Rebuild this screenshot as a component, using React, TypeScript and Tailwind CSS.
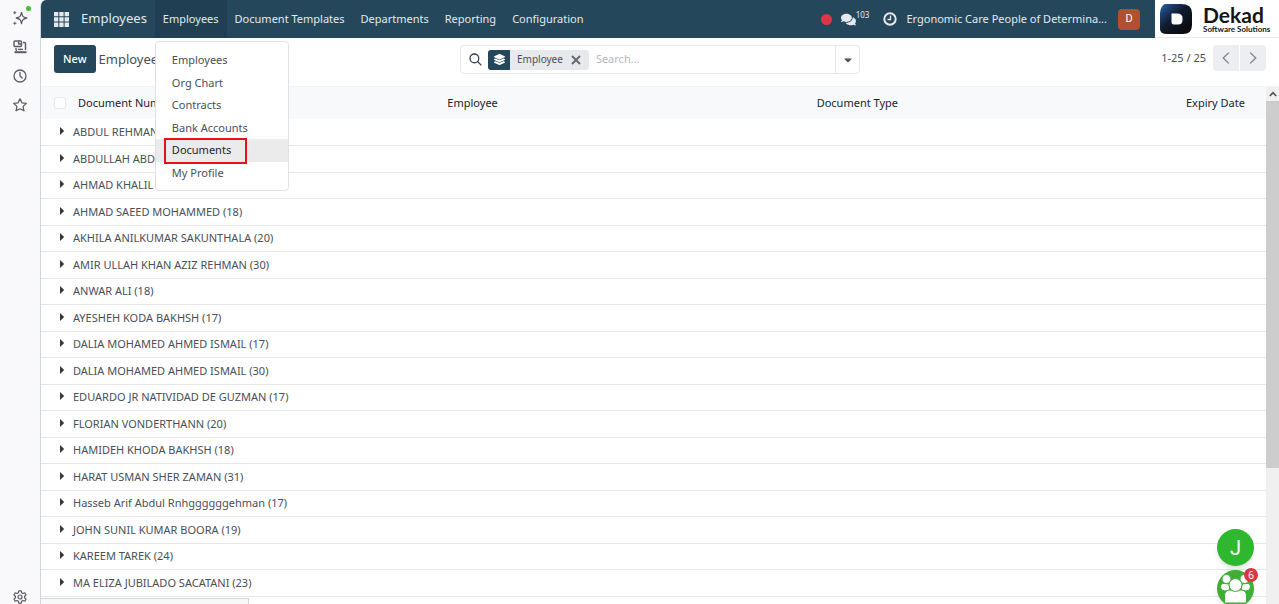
import { useState } from 'react';
import { FaCaretDown, FaComments, FaLayerGroup } from 'react-icons/fa';

const menuItems = ['Document Templates', 'Departments', 'Reporting', 'Configuration'];

const employeeLinks = ['Employees', 'Org Chart', 'Contracts', 'Bank Accounts', 'Documents', 'My Profile'];

const groups = [
  { name: 'ABDUL REHMAN', count: 17 },
  { name: 'ABDULLAH ABDUL', count: 18 },
  { name: 'AHMAD KHALIL IBRAHIM', count: 19 },
  { name: 'AHMAD SAEED MOHAMMED', count: 18 },
  { name: 'AKHILA ANILKUMAR SAKUNTHALA', count: 20 },
  { name: 'AMIR ULLAH KHAN AZIZ REHMAN', count: 30 },
  { name: 'ANWAR ALI', count: 18 },
  { name: 'AYESHEH KODA BAKHSH', count: 17 },
  { name: 'DALIA MOHAMED AHMED ISMAIL', count: 17 },
  { name: 'DALIA MOHAMED AHMED ISMAIL', count: 30 },
  { name: 'EDUARDO JR NATIVIDAD DE GUZMAN', count: 17 },
  { name: 'FLORIAN VONDERTHANN', count: 20 },
  { name: 'HAMIDEH KHODA BAKHSH', count: 18 },
  { name: 'HARAT USMAN SHER ZAMAN', count: 31 },
  { name: 'Hasseb Arif Abdul Rnhggggggehman', count: 17 },
  { name: 'JOHN SUNIL KUMAR BOORA', count: 19 },
  { name: 'KAREEM TAREK', count: 24 },
  { name: 'MA ELIZA JUBILADO SACATANI', count: 23 },
];

function Sidebar() {
  return (
    <aside className="flex w-10 shrink-0 flex-col items-center bg-[#f9f9fb] pt-[9px] text-[#5b5b66]">
      <div className="flex flex-1 flex-col items-center gap-[11px]">
        <button aria-label="Assistant" className="relative flex h-[18px] w-4 items-center justify-center">
          <svg viewBox="0 0 16 16" className="h-4 w-4 shrink-0" fill="none" stroke="currentColor" strokeWidth="1.3" strokeLinejoin="round">
            <path d="M9.500 2.400 C10.200 6.300 11 7.300 14.800 8 C11 8.800 10.200 9.700 9.500 13.600 C8.800 9.700 8 8.800 4.200 8 C8 7.300 8.800 6.300 9.500 2.400Z" />
            <path d="M2.800 1.200v3M1.300 2.700h3M2.800 11.800v3M1.300 13.300h3" strokeWidth="1" />
          </svg>
          <span className="absolute -right-[3px] -top-[3px] h-[5px] w-[5px] rounded-full bg-[#3fbf2f]" />
        </button>
        <button aria-label="Synced tabs" className="flex h-[18px] items-center">
          <svg viewBox="0 0 16 16" className="h-4 w-4" fill="none" stroke="currentColor" strokeWidth="1.4">
            <rect x="2" y="2" width="7.5" height="5.5" rx="1" />
            <path d="M6.600 2v3h2.900" />
            <path d="M11 3.500h1.500a1 1 0 0 1 1 1V11M4 9V10.500a1 1 0 0 0 1 1" />
            <path d="M2.500 13.200h12" strokeWidth="2" />
            <path d="M6 10.400h5" />
          </svg>
        </button>
        <button aria-label="History" className="flex h-[18px] items-center">
          <svg viewBox="0 0 16 16" className="h-4 w-4" fill="none" stroke="currentColor" strokeWidth="1.3" strokeLinecap="round">
            <circle cx="8" cy="8" r="6" />
            <path d="M8 4.500V8l2.200 2" />
          </svg>
        </button>
        <button aria-label="Bookmarks" className="flex h-[18px] items-center">
          <svg viewBox="0 0 16 16" className="h-4 w-4" fill="none" stroke="currentColor" strokeWidth="1.3" strokeLinejoin="round">
            <path d="M8 1.800l1.900 4 4.400.6-3.200 3 .8 4.400L8 11.700l-3.900 2.100.8-4.400-3.200-3 4.400-.6z" />
          </svg>
        </button>
      </div>
      <button aria-label="Settings" className="flex h-[14px] items-center">
        <svg viewBox="0 0 16 16" className="h-4 w-4" fill="none" stroke="currentColor" strokeWidth="1.200" strokeLinejoin="round">
          <path d="M6.800 1.800h2.400l.4 1.900 1.300.8 1.900-.7L14 5.900 12.600 7.200v1.600L14 10.100l-1.200 2.100-1.900-.7-1.300.8-.4 1.900H6.800l-.4-1.900-1.300-.8-1.900.7L2 10.100l1.400-1.300V7.200L2 5.900l1.200-2.100 1.900.7 1.300-.8z" />
          <circle cx="8" cy="8" r="2" />
        </svg>
      </button>
    </aside>
  );
}

function DekadLogo() {
  return (
    <a href="#" className="flex w-[124px] shrink-0 items-center gap-[11px] border-b border-gray-200 bg-white pl-[5px] text-[#151515]">
      <svg viewBox="0 0 32 30" className="h-[30px] w-8 shrink-0">
        <defs>
          <linearGradient id="dekad" x1="0" y1="0" x2="0.8" y2="0.8">
            <stop offset="0" stopColor="#2f63a8" />
            <stop offset="0.25" stopColor="#1d3f70" />
            <stop offset="0.55" stopColor="#101c2e" />
            <stop offset="1" stopColor="#0b0d12" />
          </linearGradient>
        </defs>
        <path d="M5 0H21Q32 0 32 9V21Q32 30 23 30H7Q0 30 0 25V9Q0 5 2 2.500Q3.500 0 5 0Z" fill="url(#dekad)" />
        <path d="M11.500 9.500H17Q22.500 9.500 22.500 14V16Q22.500 20.500 18 20.500H14Q11.500 20.500 11.500 18Z" fill="#fff" />
      </svg>
      <span className="flex flex-col whitespace-nowrap font-[Lato,sans-serif] font-bold">
        <span className="text-[21px] leading-5">Dekad</span>
        <span className="text-[8px] leading-2">Software Solutions</span>
      </span>
    </a>
  );
}

function EmployeesMenu() {
  const [open, setOpen] = useState(true);

  return (
    <div className="relative flex">
      <button onClick={() => setOpen(!open)} className="bg-[#213f52] px-2">
        Employees
      </button>
      {open && (
        <div className="absolute left-0 top-full z-20 mt-[3px] flex w-[134px] flex-col rounded border border-[#dee2e6] bg-white pb-[6px] pt-[7px] text-[#495057]">
          {employeeLinks.map((link) => (
            <a
              key={link}
              href="#"
              className={
                link === 'Documents'
                  ? 'relative flex h-[23px] items-center bg-[#ebebeb] pl-4 text-[#212529]'
                  : 'flex items-center pl-4 odd:h-[23px] even:h-[22px]'
              }
            >
              {link}
              {link === 'Documents' && (
                <span className="absolute left-2 h-[26px] w-[83px] border-2 border-[#e3131b]" />
              )}
            </a>
          ))}
        </div>
      )}
    </div>
  );
}

function Navbar() {
  return (
    <header className="flex h-[38px] shrink-0 bg-[#25475b] text-[#e4e9ed]">
      <nav className="flex items-stretch whitespace-nowrap">
        <button aria-label="Home menu" className="pl-[13px] pr-3">
          <svg viewBox="0 0 15 15" className="h-[15px] w-[15px]" fill="currentColor">
            <path d="M0 0h4.300v4.300H0zM5.300 0h4.300v4.300H5.300zM10.600 0H15v4.300h-4.400zM0 5.300h4.300v4.300H0zM5.300 5.300h4.300v4.300H5.300zM10.600 5.300H15v4.300h-4.400zM0 10.600h4.300V15H0zM5.300 10.600h4.300V15H5.300zM10.600 10.600H15V15h-4.400z" />
          </svg>
        </button>
        <a href="#" className="flex items-center pr-2 text-[13px]">
          Employees
        </a>
        <EmployeesMenu />
        {menuItems.map((item) => (
          <button key={item} className="px-2">
            {item}
          </button>
        ))}
      </nav>
      <div className="ml-auto flex items-center whitespace-nowrap">
        <span className="mr-[9px] h-[11px] w-[11px] rounded-full bg-[#dc3545]" />
        <button aria-label="Messages" className="mr-[14px] flex items-center">
          <FaComments className="h-[15px] w-[15px]" />
          <sup className="top-0 mb-2 text-[8px] leading-none">103</sup>
        </button>
        <button aria-label="Activities" className="mr-[9px]">
          <svg viewBox="0 0 14 14" className="h-[14px] w-[14px]" fill="none" stroke="currentColor" strokeWidth="2">
            <circle cx="7" cy="7" r="5.700" />
            <path d="M7.500 3.500V7.500H4.500" strokeWidth="1.300" />
          </svg>
        </button>
        <button className="mr-[11px]">Ergonomic Care People of Determina...</button>
        <button className="mr-[15px] flex h-[21px] w-[22px] items-center justify-center rounded-sm bg-[#b54d31] font-[Roboto,sans-serif] text-white">
          D
        </button>
      </div>
      <DekadLogo />
    </header>
  );
}

function ControlPanel() {
  return (
    <div className="flex h-[49px] shrink-0 border-b border-gray-100 px-[13px] pt-[7px] text-[#495057]">
      <div className="flex flex-1 items-start gap-[3px]">
        <button className="h-[28px] rounded-[3px] bg-[#25475b] px-[9px] font-medium text-white">New</button>
        <h1 className="text-[13px] leading-[28px]">Employee Documents</h1>
      </div>
      <div className="flex h-[29px] w-[400px] items-stretch rounded border border-gray-200">
        <div className="flex flex-1 items-center">
          <svg viewBox="0 0 14 14" className="ml-2 mr-[6px] h-[13px] w-[13px]" fill="none" stroke="#374151" strokeWidth="1.4">
            <circle cx="5.800" cy="5.800" r="4.700" />
            <path d="M9.200 9.200L13.300 13.300" />
          </svg>
          <div className="flex h-5 items-center overflow-hidden rounded-[3px] bg-[#e7e9ed] text-[10px]">
            <span className="flex h-5 w-[22px] items-center justify-center bg-[#25475b] text-white">
              <FaLayerGroup className="h-[11px] w-[11px]" />
            </span>
            <span className="pl-[7px]">Employee</span>
            <button aria-label="Remove" className="px-2">
              <svg viewBox="0 0 10 10" className="h-[10px] w-[10px]" fill="none" stroke="#5f666d" strokeWidth="1.8">
                <path d="M1 1l8 8M9 1L1 9" />
              </svg>
            </button>
          </div>
          <input
            type="text"
            aria-label="Search"
            placeholder="Search..."
            className="min-w-0 flex-1 px-[7px] outline-none placeholder:text-[#b4b9be]"
          />
        </div>
        <button aria-label="Toggle search panel" className="flex w-6 items-center justify-center border-l border-gray-200">
          <FaCaretDown className="h-3 w-3" />
        </button>
      </div>
      <div className="flex flex-1 items-start justify-end leading-[26px]">
        <span className="mr-[7px]">1-25 / 25</span>
        <button aria-label="Previous" className="mr-px flex h-[26px] w-[26px] items-center justify-center rounded-l-sm bg-[#eceef1]">
          <svg viewBox="0 0 8 12" className="h-3 w-2" fill="none" stroke="#777d84" strokeWidth="1.200">
            <path d="M6.800 .6L1.200 6l5.600 5.400" />
          </svg>
        </button>
        <button aria-label="Next" className="flex h-[26px] w-[26px] items-center justify-center rounded-r-sm bg-[#eceef1]">
          <svg viewBox="0 0 8 12" className="h-3 w-2" fill="none" stroke="#777d84" strokeWidth="1.200">
            <path d="M1.200 .6L6.800 6l-5.600 5.400" />
          </svg>
        </button>
      </div>
    </div>
  );
}

function DocumentTable() {
  return (
    <table className="w-full table-fixed border-collapse whitespace-nowrap text-left">
      <colgroup>
        <col className="w-[31px]" />
        <col />
        <col />
        <col />
        <col className="w-[86px]" />
      </colgroup>
      <thead>
        <tr className="h-8 bg-[#f8f9fb] text-[#212529]">
          <th className="pl-[13px]">
            <input
              type="checkbox"
              aria-label="Select all"
              className="block h-3 w-3 appearance-none rounded-[3px] border border-gray-200 bg-white"
            />
          </th>
          <th className="pl-[6px] font-normal">Document Number</th>
          <th className="pl-[6px] font-normal">Employee</th>
          <th className="pl-[6px] font-normal">Document Type</th>
          <th className="pl-[6px] font-normal">Expiry Date</th>
        </tr>
      </thead>
      <tbody className="text-[#495057]">
        {groups.map((group, index) => (
          <tr key={index} className="border-b border-gray-200 odd:h-[26px] even:h-[27px]">
            <td colSpan={5} className="pl-[18px]">
              <button className="flex items-center gap-2 leading-5">
                <svg viewBox="0 0 6 8" className="mb-[2px] h-2 w-[6px]" fill="#343a40">
                  <path d="M1 0L5.200 4L1 8z" />
                </svg>
                {group.name} ({group.count})
              </button>
            </td>
          </tr>
        ))}
      </tbody>
    </table>
  );
}

function ScrollBar() {
  return (
    <div className="flex w-[13px] shrink-0 flex-col bg-[#f0f0f0]">
      <div className="flex h-[14px] items-center justify-center">
        <svg viewBox="0 0 8 6" className="h-[6px] w-2" fill="none" stroke="#505050" strokeWidth="1.600">
          <path d="M.8 5L4 1.600 7.200 5" />
        </svg>
      </div>
      <div className="h-[71%] bg-[#cdcdcd]" />
    </div>
  );
}

function ChatBubbles() {
  return (
    <div className="absolute -bottom-[3px] right-[25px] flex flex-col gap-1">
      <button className="flex h-[37px] w-[37px] items-center justify-center rounded-full bg-[#2eb82e] font-[Roboto,sans-serif] text-xl text-white shadow-md">
        J
      </button>
      <button aria-label="Group chat" className="relative h-[37px] w-[37px] rounded-full bg-[#3fae35] shadow-md">
        <svg viewBox="0 0 37 37" className="h-[37px] w-[37px]" fill="#fff" stroke="#3fae35" strokeWidth="1">
          <circle cx="9.500" cy="9" r="4.500" />
          <circle cx="27.500" cy="9" r="4.500" />
          <path d="M3.500 17Q4 13 7 13.500L12 14 13 20 8 21Q4 21 3.500 17Z" />
          <path d="M33.500 17Q33 13 30 13.500L25 14 24 20 29 21Q33 21 33.500 17Z" />
          <path d="M7.500 33V26Q7.500 19.500 14 20H23Q29.500 19.500 29.500 26V33Z" />
          <circle cx="18.500" cy="15" r="6.500" />
        </svg>
        <span className="absolute -right-1 -top-[2px] flex h-[14px] w-[14px] items-center justify-center rounded-full bg-[#dc3545] text-[10px] text-white">
          6
        </span>
      </button>
    </div>
  );
}

export default function App() {
  return (
    <div className="flex h-screen overflow-hidden bg-[#f9f9fb] font-['Noto_Sans','Open_Sans',sans-serif] text-[11px]">
      <Sidebar />
      <main className="relative flex min-w-0 flex-1 flex-col overflow-hidden rounded-tl-md border-l border-gray-300 bg-white">
        <Navbar />
        <ControlPanel />
        <div className="flex min-h-0 flex-1">
          <div className="min-w-0 flex-1 overflow-hidden">
            <DocumentTable />
          </div>
          <ScrollBar />
        </div>
        <div className="absolute bottom-0 left-0 h-[6px] w-[208px] border-r border-t border-gray-300 bg-[#f8f8f8]" />
        <ChatBubbles />
      </main>
    </div>
  );
}
